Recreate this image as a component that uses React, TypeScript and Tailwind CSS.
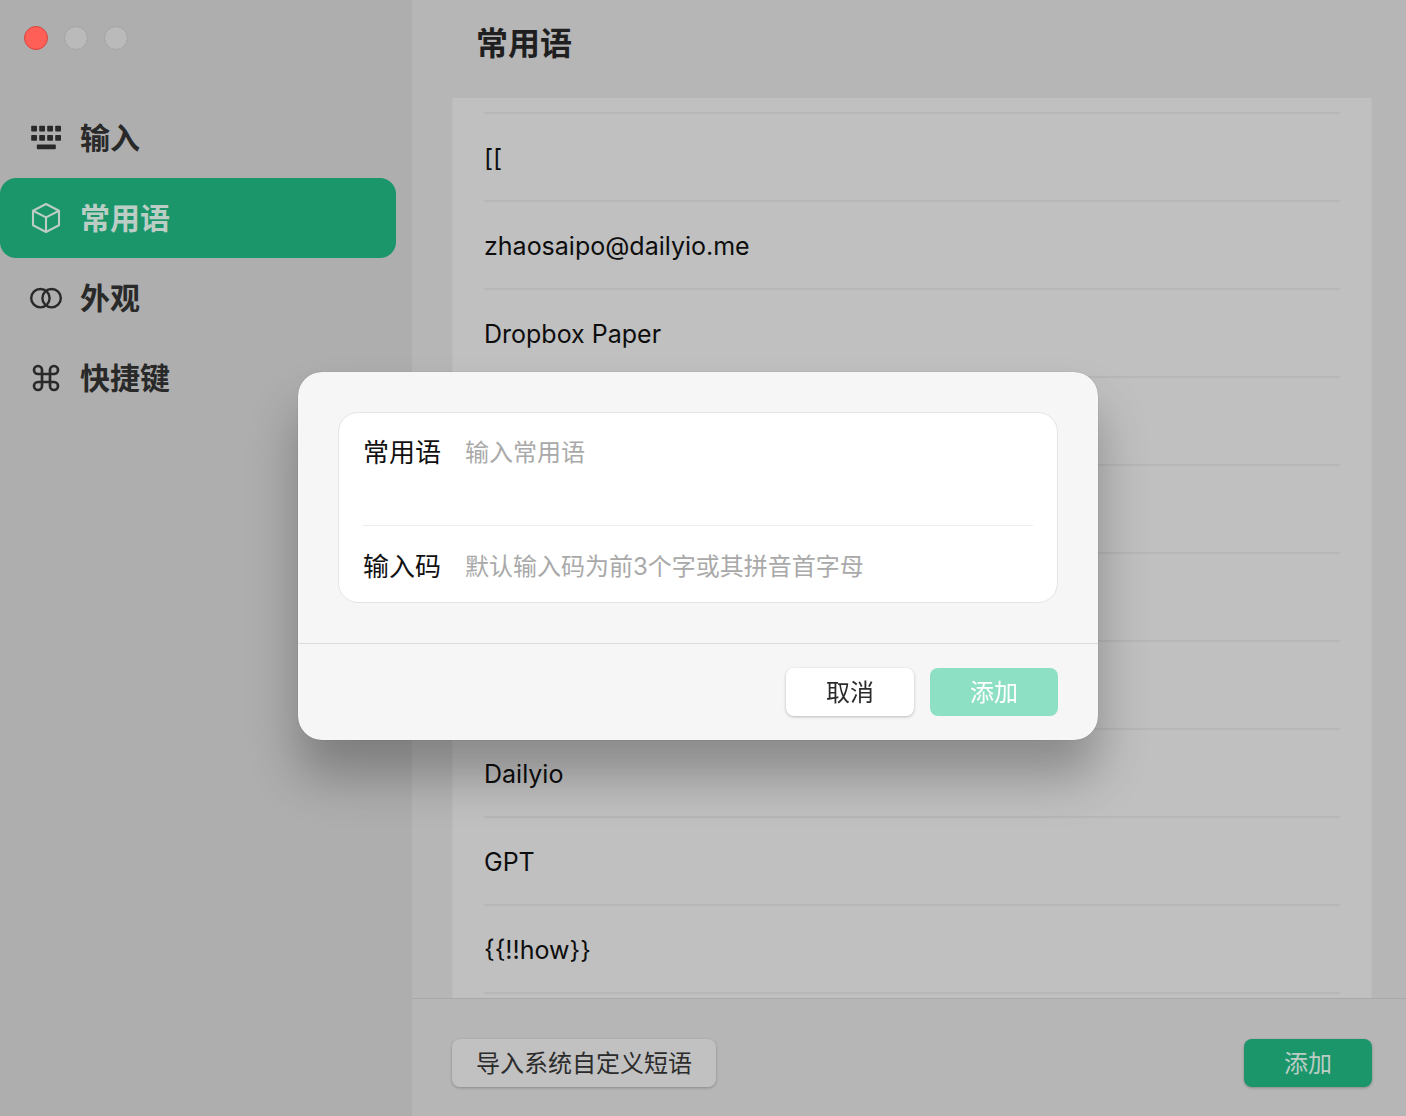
import clsx from 'clsx';
import { useState } from 'react';
import type { ReactNode } from 'react';
import { Command } from 'lucide-react';

type INavItem = {
  id: string;
  label: string;
  icon: ReactNode;
};

function KeyboardIcon() {
  return (
    <svg viewBox="0 0 32 32" className="size-8" fill="currentColor" aria-hidden="true">
      {[1.2, 9.2, 17.2, 25.2].map(x => (
        <g key={x}>
          <rect x={x} y="3.8" width="5.8" height="5.8" rx="0.8" />
          <rect x={x} y="13" width="5.8" height="5.8" rx="0.8" />
        </g>
      ))}
      <rect x="6.8" y="22.6" width="19" height="4.6" rx="0.8" />
    </svg>
  );
}

function CubeIcon() {
  return (
    <svg
      viewBox="0 0 32 32"
      className="size-8"
      fill="none"
      stroke="currentColor"
      strokeWidth="2.1"
      strokeLinejoin="round"
      aria-hidden="true"
    >
      <path d="M16 2 29 8.8V23.2L16 30 3 23.2V8.8L16 2Z" />
      <path d="M3 8.8 16 15.4 29 8.8M16 15.4V30" />
    </svg>
  );
}

function RingsIcon() {
  return (
    <svg viewBox="0 0 32 32" className="size-8" fill="none" stroke="currentColor" strokeWidth="2.4" aria-hidden="true">
      <circle cx="10.4" cy="16.2" r="9.2" />
      <circle cx="21.6" cy="16.2" r="9.2" />
    </svg>
  );
}

const navItems: INavItem[] = [
  { id: 'input', label: '输入', icon: <KeyboardIcon /> },
  { id: 'phrases', label: '常用语', icon: <CubeIcon /> },
  { id: 'appearance', label: '外观', icon: <RingsIcon /> },
  { id: 'shortcuts', label: '快捷键', icon: <Command size={32} strokeWidth={2} aria-hidden="true" /> }
];

const phrases = ['[[', 'zhaosaipo@dailyio.me', 'Dropbox Paper', '', '', '', '', 'Dailyio', 'GPT', '{{!!how}}', ''];

function Sidebar() {
  const [active, setActive] = useState('phrases');

  return (
    <aside className="w-[412px] shrink-0 bg-[#aeaeae]">
      <div className="flex gap-4 px-6 pt-[26px] pb-12">
        <span className="size-6 rounded-full border border-[#d9443c] bg-[#ff5f57]" />
        <span className="size-6 rounded-full border border-[#a4a4a4] bg-[#bababa]" />
        <span className="size-6 rounded-full border border-[#a4a4a4] bg-[#bababa]" />
      </div>
      <nav className="mr-4 flex flex-col">
        {navItems.map(item => (
          <button
            key={item.id}
            type="button"
            onClick={() => setActive(item.id)}
            className={clsx(
              'flex h-20 items-center gap-[18px] rounded-2xl px-[30px] text-[30px] leading-10 font-bold',
              active === item.id ? 'bg-[#1b966b] text-[#bbcdc5]' : 'text-[#292929]'
            )}
          >
            {item.icon}
            <span>{item.label}</span>
          </button>
        ))}
      </nav>
    </aside>
  );
}

function PhraseList() {
  return (
    <main className="flex min-w-0 flex-1 flex-col bg-[#b6b6b6]">
      <h1 className="px-16 pt-6 text-[32px] leading-10 font-bold text-[#1f1f1f]">常用语</h1>
      <ul className="mt-[34px] mr-[34px] ml-10 min-h-0 flex-1 overflow-hidden border-x border-[#bcbcbc] bg-[#c0c0c0] px-[31px] pt-3.5">
        {phrases.map((phrase, i) => (
          <li key={i} className="flex h-[88px] items-center border-t-2 border-[#b7b7b7] pt-1 text-[25px] text-[#0d0d0d]">
            {phrase}
          </li>
        ))}
      </ul>
      <footer className="flex h-[118px] shrink-0 items-start justify-between border-t border-[#a9a9a9] pt-10 pr-[34px] pl-10">
        <button
          type="button"
          className="h-12 rounded-lg bg-[#c1c1c1] px-6 pt-0.5 text-2xl text-[#2b2b2b] shadow-[0_1px_3px_rgba(0,0,0,0.25)]"
        >
          导入系统自定义短语
        </button>
        <button
          type="button"
          className="h-12 w-32 rounded-lg bg-[#1b966b] pt-0.5 text-2xl text-[#bbcdc5] shadow-[0_1px_3px_rgba(0,0,0,0.25)]"
        >
          添加
        </button>
      </footer>
    </main>
  );
}

function AddPhraseDialog() {
  const [phrase, setPhrase] = useState('');
  const [code, setCode] = useState('');

  return (
    <div className="fixed inset-0 flex items-center justify-center pr-2.5 pb-1">
      <form
        role="dialog"
        aria-label="常用语"
        onSubmit={event => event.preventDefault()}
        className="w-full max-w-[800px] rounded-3xl bg-[#f6f6f6] shadow-[0_0_1px_rgba(0,0,0,0.4),0_36px_50px_rgba(0,0,0,0.28)]"
      >
        <div className="p-10">
          <div className="rounded-[20px] border border-[#e4e4e4] bg-white px-6">
            <div className="flex gap-6 border-b border-[#ececec] pt-[25px] pb-[27px]">
              <label htmlFor="phrase" className="shrink-0 text-[26px] leading-[30px] text-[#111]">
                常用语
              </label>
              <textarea
                id="phrase"
                rows={2}
                value={phrase}
                onChange={event => setPhrase(event.target.value)}
                placeholder="输入常用语"
                className="min-w-0 flex-1 resize-none text-2xl leading-[30px] outline-none placeholder:text-[#a9a9a9]"
              />
            </div>
            <div className="flex gap-6 pt-[26px] pb-5">
              <label htmlFor="code" className="shrink-0 text-[26px] leading-[30px] text-[#111]">
                输入码
              </label>
              <input
                id="code"
                type="text"
                value={code}
                onChange={event => setCode(event.target.value)}
                placeholder="默认输入码为前3个字或其拼音首字母"
                className="h-[30px] min-w-0 flex-1 text-2xl leading-[30px] outline-none placeholder:text-[#a9a9a9]"
              />
            </div>
          </div>
        </div>
        <div className="flex justify-end gap-4 border-t border-[#dcdcdc] px-10 py-6">
          <button
            type="button"
            className="h-12 w-32 rounded-lg bg-white pt-0.5 text-2xl text-[#2b2b2b] shadow-[0_1px_3px_rgba(0,0,0,0.25)]"
          >
            取消
          </button>
          <button
            type="submit"
            disabled={!phrase}
            className="h-12 w-32 rounded-lg bg-[#8ee0c4] pt-0.5 text-2xl text-white"
          >
            添加
          </button>
        </div>
      </form>
    </div>
  );
}

export default function App() {
  return (
    <div className="flex h-screen font-[Inter,'Noto_Sans_CJK_SC',sans-serif]">
      <Sidebar />
      <PhraseList />
      <AddPhraseDialog />
    </div>
  );
}
